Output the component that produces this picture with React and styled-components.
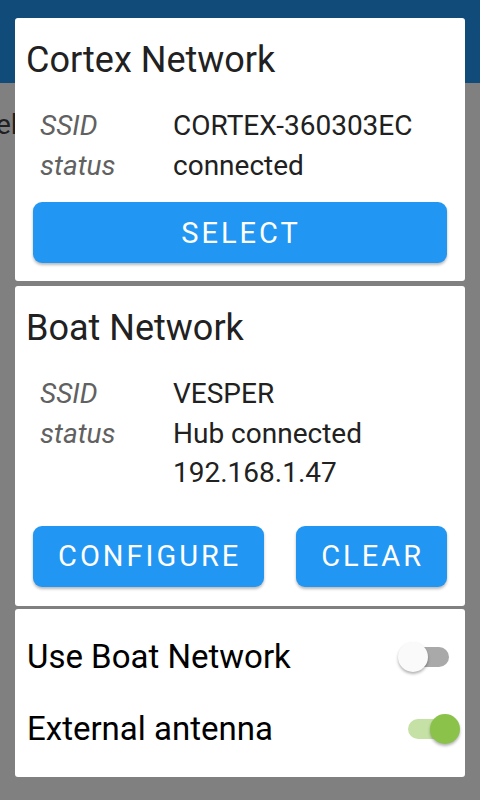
import React from "react";
import styled, {createGlobalStyle} from "styled-components";

const GlobalStyle = createGlobalStyle`
    html, body {
        margin: 0;
        padding: 0;
        background: #808080;
        font-family: Roboto, "Noto Sans", sans-serif;
    }
    * { box-sizing: border-box; }
`

const Page = styled.div`
    position: relative;
    width: 480px;
    height: 800px;
    overflow: hidden;
    background: #808080;
`

const AppBar = styled.div`
    height: 83px;
    background: #114b7a;
`

const BehindText = styled.div`
    margin: 22px 0 0 -4px;
    font-size: 28px;
    line-height: 40px;
    color: #202020;
`

const Dialog = styled.div`
    position: absolute;
    top: 18px;
    left: 15px;
    width: 450px;
    display: flex;
    flex-direction: column;
`

const Card = styled.div`
    background: #fff;
    border-radius: 3px;
    margin-bottom: ${props => props.gap || 0}px;
    padding: ${props => props.pad || "21px 0 18px 0"};
`

const Title = styled.div`
    font-size: 36px;
    line-height: 42px;
    color: #212121;
    padding: 0 11px;
`

const InfoGrid = styled.div`
    display: grid;
    grid-template-columns: 133px 1fr;
    margin-top: 25px;
    padding-left: 25px;
    font-size: 28px;
    line-height: 39.5px;
`

const Label = styled.div`
    font-style: italic;
    color: #616161;
`

const Value = styled.div`
    color: #212121;
`

const Buttons = styled.div`
    display: flex;
    justify-content: space-between;
    padding: 0 18px;
    margin-top: ${props => props.top}px;
`

const Button = styled.button`
    flex: ${props => props.wide ? 1 : "none"};
    height: 61px;
    padding: 0 23px 0 25px;
    border: none;
    border-radius: 9px;
    background: #2196f3;
    color: #fff;
    font-family: Roboto, sans-serif;
    font-size: 29px;
    letter-spacing: 3px;
    box-shadow: 0 2px 3px rgba(0, 0, 0, 0.28);
`

const ToggleRow = styled.div`
    display: flex;
    align-items: center;
    justify-content: space-between;
    height: 72px;
    font-size: 33px;
    color: #000;
`

const Switch = styled.div`
    position: relative;
    width: 62px;
    height: 30px;
`

const Track = styled.div`
    position: absolute;
    left: 10px;
    top: 5px;
    width: 41px;
    height: 20px;
    border-radius: 10px;
    background: ${props => props.on ? "#c5e1a5" : "#a9a9a9"};
`

const Thumb = styled.div`
    position: absolute;
    top: 0;
    left: ${props => props.on ? 32 : 0}px;
    width: 30px;
    height: 30px;
    border-radius: 50%;
    background: ${props => props.on ? "#8bc34a" : "#fafafa"};
    box-shadow: 0 2px 3px rgba(0, 0, 0, 0.3);
`

const Toggle = ({on}) => (
    <Switch>
        <Track on={on ? 1 : 0}/>
        <Thumb on={on ? 1 : 0}/>
    </Switch>
)

export default function App() {
    return (
        <Page>
            <GlobalStyle/>
            <AppBar/>
            <BehindText>el</BehindText>
            <Dialog>
                <Card gap={5}>
                    <Title>Cortex Network</Title>
                    <InfoGrid>
                        <Label>SSID</Label>
                        <Value>CORTEX-360303EC</Value>
                        <Label>status</Label>
                        <Value>connected</Value>
                    </InfoGrid>
                    <Buttons top={17}>
                        <Button wide>SELECT</Button>
                    </Buttons>
                </Card>
                <Card gap={3} pad="21px 0 19px 0">
                    <Title>Boat Network</Title>
                    <InfoGrid>
                        <Label>SSID</Label>
                        <Value>VESPER</Value>
                        <Label>status</Label>
                        <Value>Hub connected<br/>192.168.1.47</Value>
                    </InfoGrid>
                    <Buttons top={33}>
                        <Button>CONFIGURE</Button>
                        <Button>CLEAR</Button>
                    </Buttons>
                </Card>
                <Card pad="12px 5px 12px 12px">
                    <ToggleRow>
                        Use Boat Network
                        <Toggle/>
                    </ToggleRow>
                    <ToggleRow>
                        External antenna
                        <Toggle on/>
                    </ToggleRow>
                </Card>
            </Dialog>
        </Page>
    );
}
